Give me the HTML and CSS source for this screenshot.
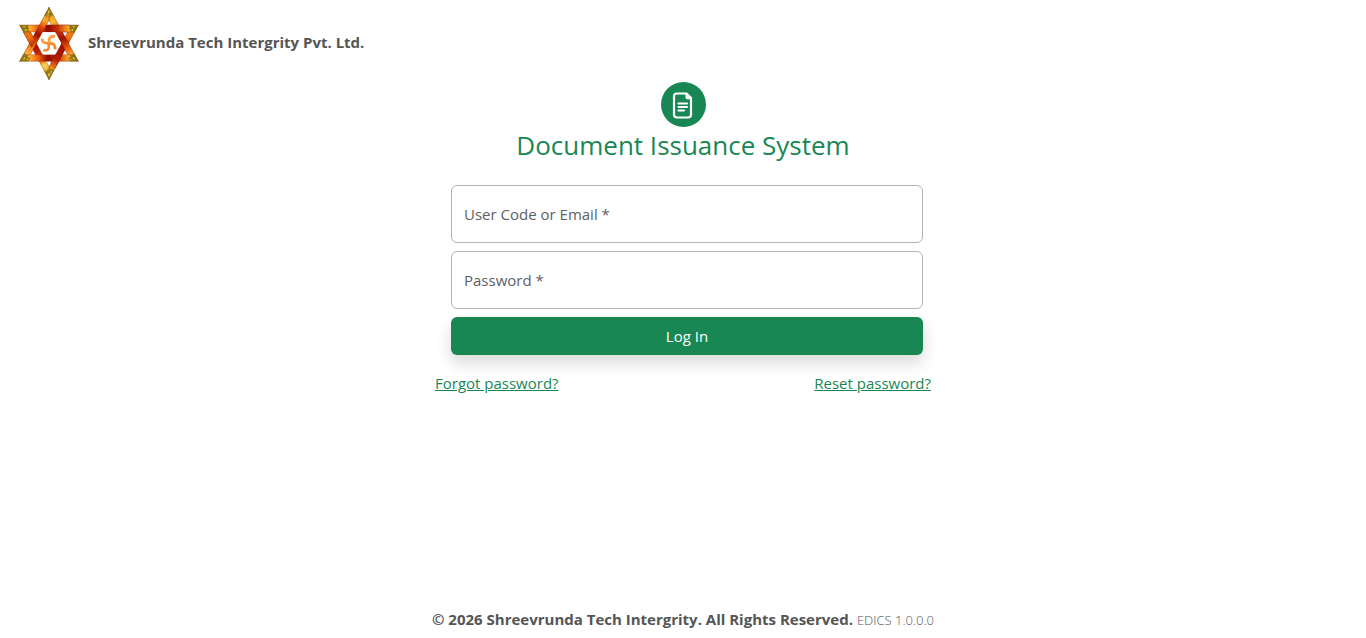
FILE: index.html
```html
<!DOCTYPE html>
<html lang="en">
<head>
<meta charset="utf-8">
<title>Document Issuance System</title>
<link rel="stylesheet" href="styles.css">
</head>
<body>
<header class="brand">
  <svg class="brand-logo" viewBox="0 0 180 219" aria-hidden="true">
    <defs>
      <linearGradient id="g1" gradientUnits="userSpaceOnUse" x1="90" y1="1" x2="178" y2="163"><stop offset="0" stop-color="#d99a16"/><stop offset=".25" stop-color="#ffb52e"/><stop offset=".4" stop-color="#c93a08"/><stop offset=".55" stop-color="#a01000"/><stop offset=".72" stop-color="#e8560a"/><stop offset=".86" stop-color="#ffb136"/><stop offset="1" stop-color="#b08a18"/></linearGradient>
      <linearGradient id="g2" gradientUnits="userSpaceOnUse" x1="90" y1="1" x2="2" y2="163"><stop offset="0" stop-color="#c08a14"/><stop offset=".22" stop-color="#ffa526"/><stop offset=".36" stop-color="#d93c08"/><stop offset=".48" stop-color="#a01000"/><stop offset=".66" stop-color="#f0660c"/><stop offset=".82" stop-color="#ffb136"/><stop offset="1" stop-color="#b08a18"/></linearGradient>
      <linearGradient id="g3" gradientUnits="userSpaceOnUse" x1="2" y1="0" x2="178" y2="0"><stop offset="0" stop-color="#b08a18"/><stop offset=".16" stop-color="#ffb52e"/><stop offset=".33" stop-color="#ea5c0a"/><stop offset=".48" stop-color="#8e0a00"/><stop offset=".64" stop-color="#c52c05"/><stop offset=".84" stop-color="#ffac2b"/><stop offset="1" stop-color="#b08a18"/></linearGradient>
      <linearGradient id="g4" gradientUnits="userSpaceOnUse" x1="90" y1="218" x2="178" y2="54"><stop offset="0" stop-color="#b08a18"/><stop offset=".2" stop-color="#f08a18"/><stop offset=".34" stop-color="#b51d04"/><stop offset=".58" stop-color="#a01000"/><stop offset=".75" stop-color="#f47414"/><stop offset="1" stop-color="#c09018"/></linearGradient>
      <linearGradient id="g5" gradientUnits="userSpaceOnUse" x1="90" y1="218" x2="2" y2="54"><stop offset="0" stop-color="#b08a18"/><stop offset=".24" stop-color="#ffd04b"/><stop offset=".38" stop-color="#d94008"/><stop offset=".56" stop-color="#a51200"/><stop offset=".74" stop-color="#f4700c"/><stop offset="1" stop-color="#c09018"/></linearGradient>
    </defs>
    <g stroke="#791000" stroke-width="1">
      <path fill="url(#g3)" d="M2 54H178L166 75H14Z"/>
      <path fill="url(#g4)" d="M178 54 90 218V179L146 75Z"/>
      <path fill="url(#g5)" d="M2 54 90 218V179L34 75Z"/>
      <path fill="url(#g1)" d="M90 1 178 163 146 143 90 40Z"/>
      <path fill="url(#g2)" d="M90 1 2 163 34 143 90 40Z"/>
      <path fill="url(#g3)" d="M2 163H178L167 143H13Z"/>
      <path fill="url(#g3)" d="M82 54H150L161 75H82Z"/>
      <path fill="url(#g4)" d="M109 143H130L108 184 96 168Z"/>
      <path fill="url(#g5)" d="M13 75H34L48 100 38 121Z"/>
    </g>
    <path fill="#fff" d="M72 76H108L126 109 108 142H72L54 109Z"/>
    <g fill="#8d7415">
      <path d="M90 1 105 28 98 24 94 31 89 24 82 31 81 25 75 28ZM2 54H31L26 60 32 65 24 68 27 75 18 73 17 81ZM178 54H149L154 61 148 66 156 68 153 75 162 73 164 81ZM2 163 17 136 20 145 28 144 25 151 34 154 28 163ZM178 163 163 136 160 145 152 144 155 151 147 154 152 163ZM90 218 75 190 82 194 87 187 91 194 98 186 105 190Z"/>
    </g>
    <g fill="#efc23e">
      <path d="m90 9 3 6-4 5-3-5ZM84 22h5v4h-4ZM12 58h8l-5 5ZM17 67h5v5h-4ZM168 58h-8l5 5ZM163 67h-5v5h4ZM12 158l4-9 4 6ZM23 155h5v4h-5ZM168 158l-4-9-4 6ZM157 155h-5v4h5ZM90 209l-4-7 4-5 4 5ZM94 193h5v4h-5Z"/>
    </g>
    <g fill="none" stroke-width="8" stroke-linejoin="round">
      <path d="M108 89Q93 86 91 96L89 122Q87 133 73 129" stroke="#f8892d"/>
      <path d="M70 95Q69 107 80 108L99 110Q109 112 108 127" stroke="#f8892d"/>
      <path d="M107 88Q94 86 91 96L90 108M71 96Q70 106 80 107" stroke="#ffab45" stroke-width="5"/>
    </g>
  </svg>
  <strong class="brand-name">Shreevrunda Tech Intergrity Pvt. Ltd.</strong>
</header>
<main class="login">
  <svg class="app-icon" viewBox="0 0 45 45" aria-hidden="true">
    <circle cx="22.5" cy="22.5" r="22.5" fill="#198754"/>
    <path d="M25.5 11.5H16a3 3 0 0 0-3 3v18a3 3 0 0 0 3 3h11a3 3 0 0 0 3-3V16Z" fill="none" stroke="#fff" stroke-width="2.200"/>
    <path d="M24.500 11v4.500a1.800 1.800 0 0 0 1.800 1.800H31V16l-5-5Z" fill="#fff"/>
    <path d="M17.500 21.500h8.500M17.500 25h8.500M17.500 28.500h5.500" stroke="#fff" stroke-width="2.200" stroke-linecap="round"/>
  </svg>
  <h1 class="title">Document Issuance System</h1>
  <form class="form">
    <div class="field">
      <input class="field-input" id="user" type="text" required>
      <label class="field-label" for="user">User Code or Email *</label>
    </div>
    <div class="field">
      <input class="field-input" id="password" type="password" required>
      <label class="field-label" for="password">Password *</label>
    </div>
    <button class="submit" type="submit">Log In</button>
  </form>
  <nav class="links">
    <a class="link" href="#forgot">Forgot password?</a>
    <a class="link" href="#reset">Reset password?</a>
  </nav>
</main>
<footer class="footer"><strong>© 2026 Shreevrunda Tech Intergrity. All Rights Reserved.</strong> <span class="version">EDICS 1.0.0.0</span></footer>
</body>
</html>
```
FILE: styles.css
```css
* { box-sizing: border-box; }

body {
  display: flex;
  flex-direction: column;
  min-height: 100vh;
  margin: 0;
  background: #fff;
  color: #555;
  font: 15px/24px "Segoe UI", "Open Sans", "Noto Sans", sans-serif;
}

.brand {
  display: flex;
  align-items: center;
  gap: 9px;
  padding: 7px 19px 0;
}

.brand-logo {
  width: 60px;
  height: 73px;
}

.brand-name {
  padding-bottom: 4px;
  font-weight: 700;
}

.login {
  display: flex;
  flex-direction: column;
  align-items: center;
  width: 100%;
  max-width: 496px;
  margin: 2px auto 0;
}

.app-icon {
  width: 45px;
  height: 45px;
}

.title {
  margin: 0 0 22px;
  color: #198754;
  font-size: 26px;
  font-weight: 400;
  line-height: 36px;
}

.form {
  display: flex;
  flex-direction: column;
  gap: 8px;
  align-self: stretch;
  padding: 0 8px 0 16px;
}

.field { position: relative; }

.field-input {
  display: block;
  width: 100%;
  height: 58px;
  padding: 16px 12px;
  border: 1px solid #adb5bd;
  border-radius: 6px;
  background: #fff;
  color: #212529;
  font: inherit;
}

.field-label {
  position: absolute;
  top: 17px;
  left: 13px;
  color: #5c6166;
  pointer-events: none;
}

.field-input:focus + .field-label,
.field-input:valid + .field-label {
  top: 2px;
  font-size: 12px;
}

.submit {
  padding: 7px 12px;
  border: 0;
  border-radius: 6px;
  background: #198754;
  box-shadow: 0 8px 16px rgba(0, 0, 0, 0.15);
  color: #fff;
  font: inherit;
  cursor: pointer;
}

.links {
  display: flex;
  justify-content: space-between;
  align-self: stretch;
  margin-top: 16px;
}

.link {
  color: #198754;
  text-decoration: underline;
}

.footer {
  margin-top: auto;
  padding-bottom: 6px;
  text-align: center;
}

.version {
  font-size: 13px;
  font-weight: 300;
}
```
